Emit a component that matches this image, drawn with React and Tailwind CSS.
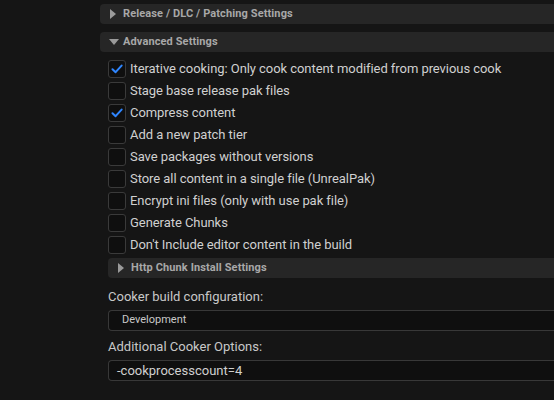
import React from "react";

const options = [
  { label: "Iterative cooking: Only cook content modified from previous cook", on: true },
  { label: "Stage base release pak files", on: false },
  { label: "Compress content", on: true },
  { label: "Add a new patch tier", on: false },
  { label: "Save packages without versions", on: false },
  { label: "Store all content in a single file (UnrealPak)", on: false },
  { label: "Encrypt ini files (only with use pak file)", on: false },
  { label: "Generate Chunks", on: false },
  { label: "Don't Include editor content in the build", on: false },
];

function Arrow({ down }) {
  return down ? (
    <svg width="10" height="6" viewBox="0 0 10 6" className="shrink-0">
      <path d="M0 0 L10 0 L5 6 Z" fill="#9a9a9a" />
    </svg>
  ) : (
    <svg width="6" height="10" viewBox="0 0 6 10" className="shrink-0">
      <path d="M0 0 L6 5 L0 10 Z" fill="#9a9a9a" />
    </svg>
  );
}

function Section({ title, down, className = "" }) {
  return (
    <div className={`flex items-center h-5 bg-[#262626] rounded-l-[4px] ${className}`}>
      <div className={`flex justify-center ${down ? "w-[22px] pl-[6px]" : "w-[22px] pl-[4px]"}`}>
        <Arrow down={down} />
      </div>
      <span className="text-[11px] font-bold text-[#a8a8a8] tracking-[0.01em] pl-[1px]">{title}</span>
    </div>
  );
}

function Check({ on }) {
  return (
    <div className="w-[18px] h-[18px] rounded-[3px] bg-[#0f0f0f] border border-[#3a3a3a] flex items-center justify-center shrink-0">
      {on && (
        <svg width="12" height="10" viewBox="0 0 12 10">
          <path d="M1.5 5.2 L4.6 8.2 L10.6 1.6" fill="none" stroke="#2f86ff" strokeWidth="2" strokeLinecap="round" strokeLinejoin="round" />
        </svg>
      )}
    </div>
  );
}

export default function App() {
  return (
    <div className="w-[554px] h-[400px] overflow-hidden bg-[#151515] font-['Roboto',sans-serif]">
      <div className="pl-[100px] pt-1">
        <Section title="Release / DLC / Patching Settings" />
        <Section title="Advanced Settings" down className="mt-2" />

        <div className="pl-2 mt-2 flex flex-col gap-1">
          {options.map((o) => (
            <div key={o.label} className="flex items-center gap-1 h-[18px]">
              <Check on={o.on} />
              <span className="text-[13px] text-[#d0d0d0] whitespace-nowrap tracking-[-0.06px]">{o.label}</span>
            </div>
          ))}
        </div>

        <div className="pl-2 mt-1">
          <Section title="Http Chunk Install Settings" />

          <div className="h-8 flex items-center text-[13px] text-[#c8c8c8] pt-[5px]">Cooker build configuration:</div>
          <div className="h-[21px] bg-[#0f0f0f] border border-[#383838] rounded-l-[4px] border-r-0 flex items-center pl-[13px] text-[11px] text-[#c8c8c8]">
            Development
          </div>

          <div className="h-[29px] flex items-center text-[13px] text-[#c8c8c8] pt-[3px]">Additional Cooker Options:</div>
          <div className="h-[21px] bg-[#0f0f0f] border border-[#383838] rounded-l-[4px] border-r-0 flex items-center pl-[8px] text-[13px] text-[#d0d0d0]">
            -cookprocesscount=4
          </div>
        </div>
      </div>
    </div>
  );
}
